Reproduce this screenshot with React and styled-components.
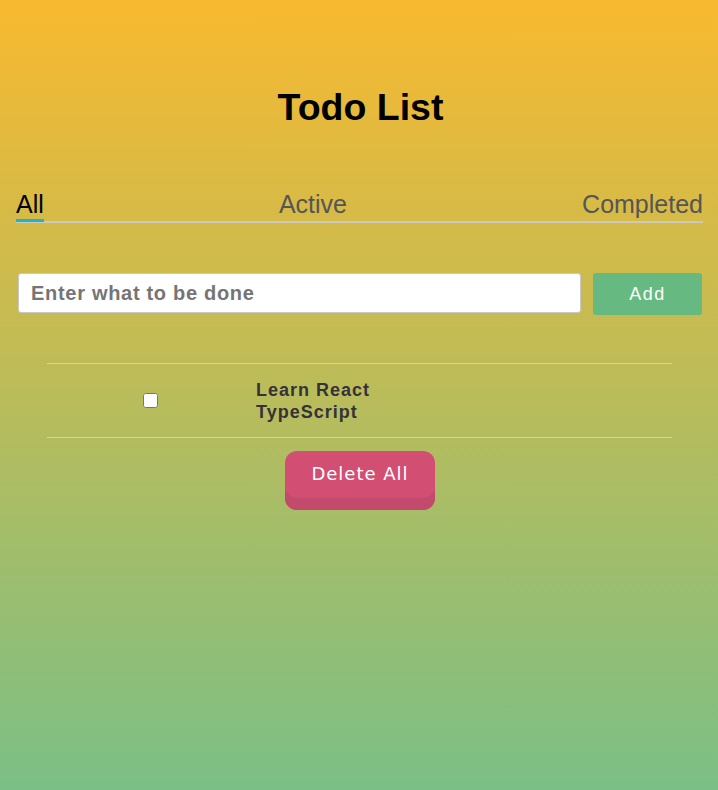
import React, { useState } from 'react';
import styled, { createGlobalStyle } from 'styled-components';

const GlobalStyle = createGlobalStyle`
    html, body {
        margin: 0;
        padding: 0;
    }
    body {
        min-height: 100vh;
        background: linear-gradient(180deg, #f8b92f 0%, #7bbf86 100%);
        font-family: "Liberation Sans", Arial, sans-serif;
    }
`;

const Page = styled.div`
    min-height: 100vh;
    padding: 86px 15px 0 16px;
    box-sizing: border-box;
`;

const Title = styled.h1`
    margin: 0;
    text-align: center;
    font-size: 37.5px;
    font-weight: bold;
    line-height: 42px;
    color: #000;
    padding-left: 2px;
`;

const Tabs = styled.div`
    display: flex;
    justify-content: space-between;
    margin-top: 62px;
    border-bottom: 2px solid #c9c9c0;
`;

const Tab = styled.button`
    position: relative;
    background: none;
    border: none;
    padding: 0 0 3px;
    font-family: inherit;
    font-size: 25px;
    line-height: 28px;
    cursor: pointer;
    color: ${(p) => (p.active ? '#000' : '#555')};

    &::after {
        content: '';
        display: ${(p) => (p.active ? 'block' : 'none')};
        position: absolute;
        left: 0;
        right: 0;
        bottom: -1px;
        height: 3px;
        background: #1fb6c4;
    }
`;

const Form = styled.form`
    display: flex;
    align-items: flex-start;
    gap: 12px;
    margin-top: 50px;
    padding: 0 1px 0 2px;
`;

const Input = styled.input`
    flex: 1;
    height: 40px;
    box-sizing: border-box;
    border: 1px solid #c8c8c8;
    border-radius: 3px;
    background: #fff;
    padding: 0 12px;
    font-family: inherit;
    font-size: 20px;
    font-weight: bold;
    letter-spacing: 0.7px;
    color: #333;
    outline: none;

    &::placeholder {
        color: #757575;
    }
`;

const AddButton = styled.button`
    width: 109px;
    height: 42px;
    border: none;
    border-radius: 3px;
    background: #67b982;
    color: #fff;
    font-family: inherit;
    font-size: 18px;
    letter-spacing: 1.5px;
    cursor: pointer;
`;

const List = styled.div`
    width: 625px;
    margin: 48px auto 0;
    border-top: 1px solid #dcd98f;
    border-bottom: 1px solid #dcd98f;
`;

const Row = styled.div`
    display: grid;
    grid-template-columns: 206px 140px 1fr;
    align-items: center;
    height: 73px;
`;

const Check = styled.input`
    justify-self: center;
    width: 15px;
    height: 15px;
    margin: 0;
`;

const ItemText = styled.span`
    padding-left: 3px;
    font-size: 18px;
    font-weight: bold;
    line-height: 22px;
    letter-spacing: 1px;
    color: #35323a;
    text-decoration: ${(p) => (p.done ? 'line-through' : 'none')};
`;

const Footer = styled.div`
    display: flex;
    justify-content: center;
    margin-top: 13px;
    padding-left: 1px;
`;

const DeleteButton = styled.button`
    width: 150px;
    height: 59px;
    padding-bottom: 16px;
    border: none;
    border-radius: 12px;
    background: #d24f73;
    box-shadow: inset 0 -12px 0 #c24a6c;
    color: #fff;
    font-family: "DejaVu Sans", Verdana, sans-serif;
    font-size: 18px;
    letter-spacing: 1px;
    cursor: pointer;
`;

const App = () => {
    const [tab, setTab] = useState('All');
    const [todos, setTodos] = useState([{ id: 1, text: 'Learn React TypeScript', done: false }]);

    const toggle = (id) =>
        setTodos(todos.map((t) => (t.id === id ? { ...t, done: !t.done } : t)));

    return (
        <>
            <GlobalStyle />
            <Page>
                <Title>Todo List</Title>
                <Tabs>
                    {['All', 'Active', 'Completed'].map((name) => (
                        <Tab key={name} active={tab === name} onClick={() => setTab(name)}>
                            {name}
                        </Tab>
                    ))}
                </Tabs>
                <Form onSubmit={(e) => e.preventDefault()}>
                    <Input placeholder="Enter what to be done" />
                    <AddButton type="submit">Add</AddButton>
                </Form>
                <List>
                    {todos.map((t) => (
                        <Row key={t.id}>
                            <Check type="checkbox" checked={t.done} onChange={() => toggle(t.id)} />
                            <ItemText done={t.done}>{t.text}</ItemText>
                            <span />
                        </Row>
                    ))}
                </List>
                <Footer>
                    <DeleteButton onClick={() => setTodos([])}>Delete All</DeleteButton>
                </Footer>
            </Page>
        </>
    );
};

export default App;
